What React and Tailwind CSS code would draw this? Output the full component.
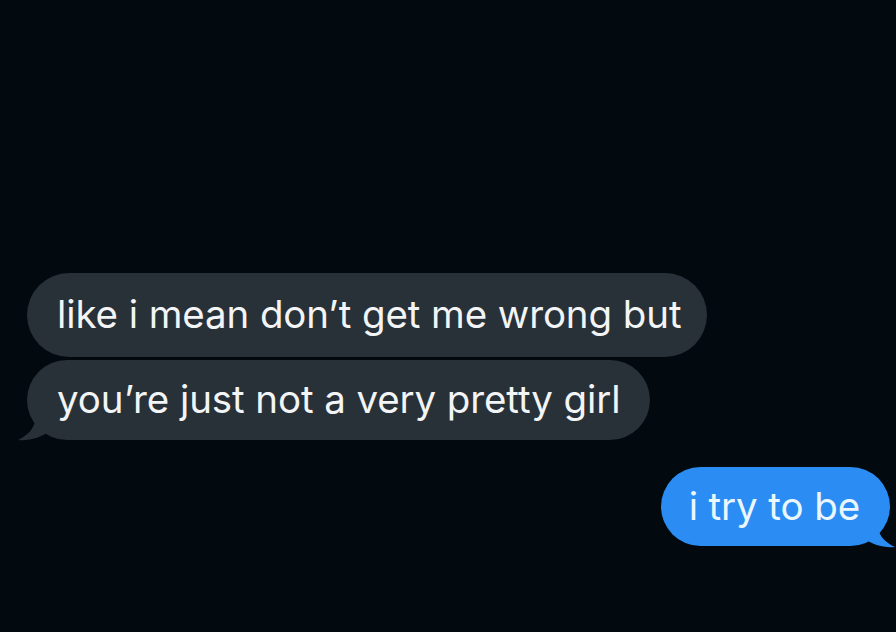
import React from "react";

function GrayTail() {
  return (
    <svg
      className="absolute left-[-12px] bottom-[-2px]"
      width="40"
      height="36"
      viewBox="0 0 40 36"
    >
      <path d="M22 0 C22 14 20 26 3 34 C14 35 26 32 36 24 L40 0 Z" fill="#283038" />
    </svg>
  );
}

function BlueTail() {
  return (
    <svg
      className="absolute right-[-8px] bottom-[-3px]"
      width="40"
      height="36"
      viewBox="0 0 40 36"
    >
      <path d="M18 0 C18 14 20 26 37 34 C26 35 14 32 4 24 L0 0 Z" fill="#2b8df3" />
    </svg>
  );
}

export default function App() {
  return (
    <div
      className="relative h-[632px] w-[896px] overflow-hidden bg-[#020a10]"
      style={{ fontFamily: "Inter, 'Liberation Sans', sans-serif" }}
    >
      <div className="flex flex-col pt-[273px]">
        <div className="flex flex-col items-start gap-[3px] pl-[27px]">
          <div className="flex h-[84px] items-center rounded-[42px] bg-[#283038] pl-[30px] pr-[26px] text-[38.5px] tracking-[-0.1px] text-[#f2f4f5]">
            like i mean don’t get me wrong but
          </div>
          <div className="relative flex h-[80px] items-center rounded-[40px] bg-[#283038] pl-[30px] pr-[30px] text-[38.5px] tracking-[-0.1px] text-[#f2f4f5]">
            <GrayTail />
            <span className="relative">you’re just not a very pretty girl</span>
          </div>
        </div>
        <div className="mt-[27px] flex justify-end pr-[6px]">
          <div className="relative flex h-[79px] items-center rounded-[40px] bg-[#2b8df3] pl-[28px] pr-[30px] text-[38.5px] tracking-[-0.1px] text-[#eaf7ff]">
            <BlueTail />
            <span className="relative">i try to be</span>
          </div>
        </div>
      </div>
    </div>
  );
}
